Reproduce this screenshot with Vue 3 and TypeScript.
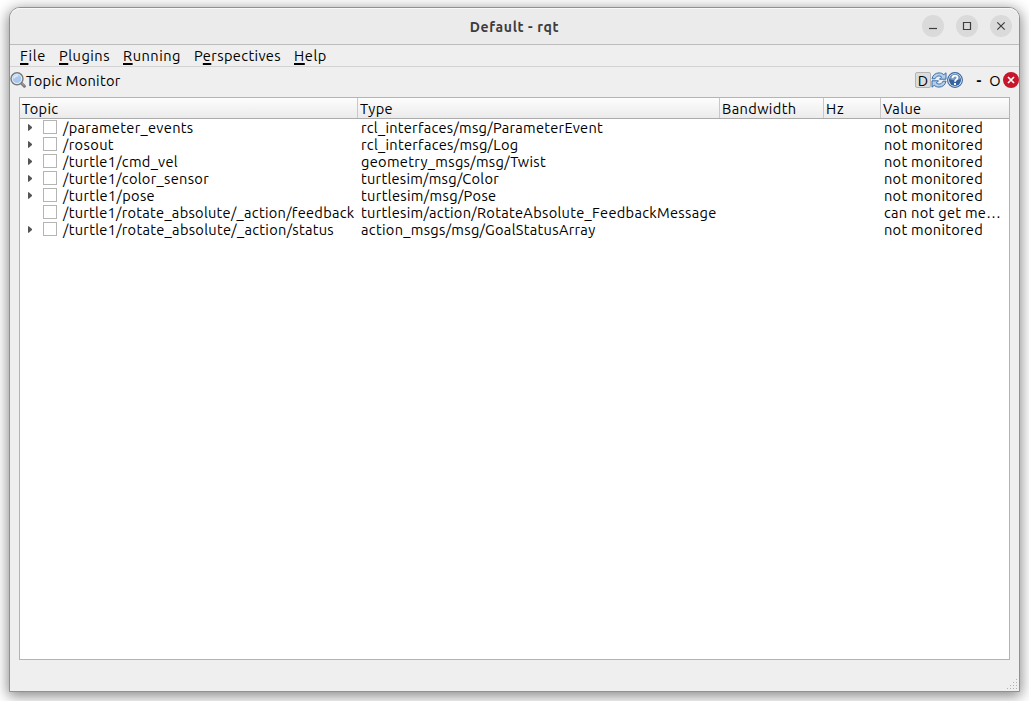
<script setup lang="ts">
import type { Directive } from 'vue'

interface MenuEntry { before: string; key: string; after: string; width: number }
interface Column { title: string; width: number; cls: string }
interface TopicRow {
  name: string
  nameWidth: number
  type: string
  typeWidth: number
  value: string
  valueWidth: number
  expandable: boolean
}

// Distributes letter spacing so that a label fills the given advance width.
const vFit: Directive<HTMLElement, number> = {
  mounted(el, { value }) {
    const natural = el.getBoundingClientRect().width
    const count = (el.textContent ?? '').length
    if (count > 0) el.style.letterSpacing = `${(value - natural) / count}px`
  },
}

const menus: MenuEntry[] = [
  { before: '', key: 'F', after: 'ile', width: 26 },
  { before: '', key: 'P', after: 'lugins', width: 51 },
  { before: '', key: 'R', after: 'unning', width: 58 },
  { before: 'P', key: 'e', after: 'rspectives', width: 87 },
  { before: '', key: 'H', after: 'elp', width: 33 },
]

const columns: Column[] = [
  { title: 'Topic', width: 36.5, cls: 'c-topic' },
  { title: 'Type', width: 33, cls: 'c-type' },
  { title: 'Bandwidth', width: 74.5, cls: 'c-band' },
  { title: 'Hz', width: 18.5, cls: 'c-hz' },
  { title: 'Value', width: 38.5, cls: 'c-value' },
]

const row = (
  name: string, nameWidth: number, type: string, typeWidth: number,
  value = 'not monitored', valueWidth = 99, expandable = true,
): TopicRow => ({ name, nameWidth, type, typeWidth, value, valueWidth, expandable })

const rows: TopicRow[] = [
  row('/parameter_events', 130.5, 'rcl_interfaces/msg/ParameterEvent', 242),
  row('/rosout', 51, 'rcl_interfaces/msg/Log', 157.5),
  row('/turtle1/cmd_vel', 115, 'geometry_msgs/msg/Twist', 185),
  row('/turtle1/color_sensor', 146, 'turtlesim/msg/Color', 138),
  row('/turtle1/pose', 92, 'turtlesim/msg/Pose', 135.5),
  row('/turtle1/rotate_absolute/_action/feedback', 291.5, 'turtlesim/action/RotateAbsolute_FeedbackMessage', 355.5, 'can not get me…', 117, false),
  row('/turtle1/rotate_absolute/_action/status', 271, 'action_msgs/msg/GoalStatusArray', 234.5),
]

const grip: [number, number][] = [
  [9, 0], [6, 3], [9, 3], [3, 6], [6, 6], [9, 6], [0, 9], [3, 9], [6, 9], [9, 9],
]
</script>

<template>
  <div class="desktop">
    <div class="window">
      <header class="titlebar">
        <span class="spacer"></span>
        <span v-fit="89.5" class="title">Default - rqt</span>
        <div class="controls">
          <svg class="ctl" viewBox="0 0 22 22"><circle cx="11" cy="11" r="11" /><path d="M7 13.5h8" /></svg>
          <svg class="ctl" viewBox="0 0 22 22"><circle cx="11" cy="11" r="11" /><path d="M7.5 7.5h7v7h-7z" /></svg>
          <svg class="ctl" viewBox="0 0 22 22"><circle cx="11" cy="11" r="11" /><path d="M7.3 7.3l7.4 7.4M14.7 7.3l-7.4 7.4" /></svg>
        </div>
      </header>

      <nav class="menubar">
        <span v-for="m in menus" :key="m.after" v-fit="m.width" class="menu">{{ m.before }}<span class="key">{{ m.key }}</span>{{ m.after }}</span>
      </nav>

      <div class="dock">
        <svg class="icon" viewBox="0 0 16 16">
          <path d="M11.2 11l3.2 3.2" stroke="#777" stroke-width="3" stroke-linecap="round" />
          <path d="M11.5 11l2.6 2.6" stroke="#bbb" stroke-width="1" />
          <circle cx="7" cy="6.8" r="6" fill="#b5d0ee" stroke="#77797a" stroke-width="1.4" />
          <circle cx="7" cy="6.8" r="4.7" fill="#a9c8ec" stroke="#e4edf6" stroke-width="1" />
          <path d="M4 6.5a3 3 0 0 1 4-2.6" fill="none" stroke="#dceafa" stroke-width="1.6" />
        </svg>
        <span v-fit="94.5" class="dock-title">Topic Monitor</span>
        <div class="dock-tools">
          <span class="dbtn">D</span>
          <svg class="icon" viewBox="0 0 16 16">
            <g fill="#b3cee9" stroke="#3b6ea9" stroke-width="1" stroke-linejoin="round">
              <path d="M1 6.8C1.7 3 4.6.9 8 .9c2 0 3.7.7 4.8 1.8L15 .8v6.4H8.5L10.7 5C9 3.5 5.5 3.3 4 6.8z" />
              <path d="M15 9.2C14.3 13 11.4 15.1 8 15.1c-2 0-3.7-.7-4.8-1.8L1 15.2V8.8h6.500L5.300 11c1.700 1.500 5.200 1.700 6.700-1.800z" />
            </g>
          </svg>
          <svg class="icon" viewBox="0 0 16 16">
            <circle cx="8" cy="8" r="7.4" fill="#e8f0f9" stroke="#38669f" stroke-width="1.1" />
            <circle cx="8" cy="8" r="6" fill="#38639c" />
            <path d="M2.5 7a5.6 5.6 0 0 1 11 0C10 8.8 6 8.8 2.5 7z" fill="#7698c3" />
            <path d="M5.5 6.2c0-3.400 5-3.300 5-.5 0 1.900-2.500 2-2.500 4" fill="none" stroke="#fff" stroke-width="1.800" />
            <rect x="7" y="11" width="2" height="2" fill="#fff" />
          </svg>
          <span class="dash">-</span>
          <span class="oh">O</span>
          <svg class="icon" viewBox="0 0 16 16">
            <circle cx="8" cy="8" r="8" fill="#c7162b" />
            <path d="M5 5l6 6M11 5l-6 6" stroke="#fff" stroke-width="1.7" />
          </svg>
        </div>
      </div>

      <main class="tree">
        <div class="thead">
          <div v-for="c in columns" :key="c.title" class="th" :class="c.cls"><span v-fit="c.width">{{ c.title }}</span></div>
        </div>
        <div v-for="r in rows" :key="r.name" class="tr">
          <div class="td c-topic">
            <svg class="arrow" viewBox="0 0 5 8"><path v-if="r.expandable" d="M0 0H1L5 3.500V4.500L1 8H0z" /></svg>
            <span class="check"></span>
            <span v-fit="r.nameWidth">{{ r.name }}</span>
          </div>
          <div class="td c-type"><span v-fit="r.typeWidth">{{ r.type }}</span></div>
          <div class="td c-band"></div>
          <div class="td c-hz"></div>
          <div class="td c-value"><span v-fit="r.valueWidth">{{ r.value }}</span></div>
        </div>
      </main>

      <footer class="statusbar">
        <svg class="grip" viewBox="0 0 10 10">
          <rect v-for="(g, i) in grip" :key="i" :x="g[0]" :y="g[1]" width="1" height="1" />
        </svg>
      </footer>
    </div>
  </div>
</template>

<style>
html,
body {
  margin: 0;
  overflow: hidden;
  background: #fff;
}
</style>

<style scoped>
.desktop {
  box-sizing: border-box;
  width: 1029px;
  height: 701px;
  padding: 7px 9px 9px;
  overflow: hidden;
  background: #fff;
  font: 14.6px/17px Ubuntu, "Noto Sans", sans-serif;
  color: #000;
  white-space: nowrap;
}
.window {
  box-sizing: border-box;
  display: flex;
  flex-direction: column;
  width: 1011px;
  height: 685px;
  border: 1px solid #909090;
  border-radius: 11px 11px 0 0;
  background: #efefef;
  box-shadow: 0 3px 14px 1px rgba(0, 0, 0, 0.48);
}
.titlebar {
  box-sizing: border-box;
  display: grid;
  grid-template-columns: 1fr auto 1fr;
  align-items: center;
  height: 37px;
  flex: none;
  border-bottom: 1px solid #bcbcbc;
  border-radius: 10px 10px 0 0;
  background: #ebebeb;
  box-shadow: inset 0 1px #f8f8f8;
}
.title {
  font-size: 14px;
  font-weight: 700;
  color: #3d3d3d;
  padding-top: 2px;
}
.controls {
  display: flex;
  justify-content: flex-end;
  gap: 12px;
  padding: 0 7px 0 0;
}
.ctl {
  width: 22px;
  height: 22px;
  fill: #dadada;
}
.ctl path {
  fill: none;
  stroke: #3d3d3d;
  stroke-width: 1.2;
}
.menubar {
  box-sizing: border-box;
  display: flex;
  gap: 13px;
  height: 22px;
  flex: none;
  padding: 2px 0 0 10px;
  border-bottom: 1px solid #d3d3d3;
}
.key {
  text-decoration: underline;
  text-decoration-thickness: 2px;
  text-underline-offset: 2px;
  text-decoration-skip-ink: none;
}
.dock {
  display: flex;
  height: 30px;
  flex: none;
  align-items: flex-start;
  padding-top: 5px;
  box-sizing: border-box;
}
.icon {
  width: 16px;
  height: 16px;
  flex: none;
}
.dock-tools {
  display: flex;
  margin-left: auto;
}
.dbtn {
  box-sizing: border-box;
  width: 16px;
  height: 16px;
  border: 1px solid #b4b4b4;
  border-radius: 2px;
  background: #dcdcdc;
  line-height: 16px;
  text-align: center;
}
.dash {
  width: 32px;
  text-align: center;
  font-weight: 700;
  line-height: 18px;
}
.oh {
  width: 16px;
  margin-left: -8px;
  text-align: center;
  line-height: 18px;
}
.tree {
  box-sizing: border-box;
  width: 991px;
  height: 563px;
  flex: none;
  margin-left: 9px;
  border: 1px solid #b4b4b4;
  background: #fff;
}
.thead {
  display: flex;
  box-sizing: border-box;
  height: 21px;
  border-bottom: 1px solid #ababab;
  background: linear-gradient(#fdfdfd, #ebebeb);
}
.th {
  box-sizing: border-box;
  padding: 2px 0 0 2px;
  border-right: 1px solid #c8c8c8;
}
.th:last-child {
  border-right: 0;
}
.c-topic { width: 338px; }
.c-type { width: 362px; }
.c-band { width: 104px; }
.c-hz { width: 57px; }
.c-value { width: 128px; }
.tr {
  display: flex;
  height: 17px;
}
.td {
  box-sizing: border-box;
  display: flex;
  padding-left: 3px;
}
.td.c-topic {
  padding-left: 8px;
}
.arrow {
  width: 4px;
  height: 7px;
  margin: 5px 11px 0 0;
  fill: #555;
}
.check {
  box-sizing: border-box;
  width: 14px;
  height: 14px;
  margin: 1px 6px 0 0;
  border: 1px solid #b4b4b4;
  background: #fff;
}
.statusbar {
  display: flex;
  flex: 1;
  align-items: flex-end;
  justify-content: flex-end;
  padding: 0 2px 2px 0;
}
.grip {
  width: 10px;
  height: 10px;
  fill: #b0b0b0;
}
</style>
